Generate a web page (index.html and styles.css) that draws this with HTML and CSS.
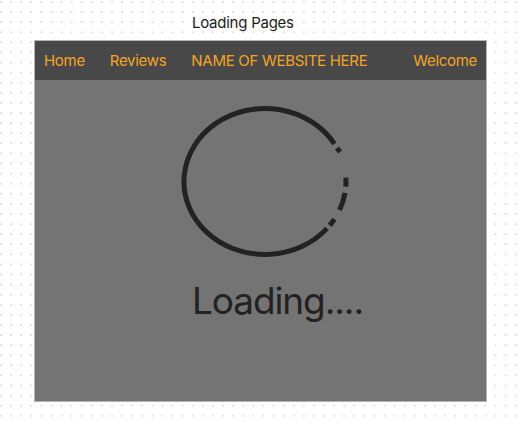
FILE: index.html
```html
<!DOCTYPE html>
<html>
<head>
<meta charset="utf-8">
<link rel="stylesheet" href="styles.css">
</head>
<body>
  <div class="title">Loading Pages</div>
  <div class="frame">
    <nav class="nav">
      <span class="nav-item">Home</span>
      <span class="nav-item">Reviews</span>
      <span class="nav-item">NAME OF WEBSITE HERE</span>
      <span class="nav-item nav-right">Welcome</span>
    </nav>
    <main class="content">
      <svg class="spinner" width="451" height="190" viewBox="35 80 451 190">
        <g fill="none" stroke="#222222" stroke-width="5">
          <path d="M327.0 228.4 A81 73 0 1 1 334.4 143.9"/>
          <path d="M336.9 148.2 L340.2 151.9"/>
          <path d="M345.9 177.7 A81 73 0 0 1 345.8 186.6"/>
          <path d="M345.0 192.9 A81 73 0 0 1 339.6 210.0"/>
          <path d="M334.4 219.1 A81 73 0 0 1 329.7 225.4"/>
        </g>
      </svg>
      <div class="loading">Loading....</div>
    </main>
  </div>
</body>
</html>
```
FILE: styles.css
```css
html, body {
  margin: 0;
  padding: 0;
}
body {
  width: 522px;
  height: 424px;
  overflow: hidden;
  font-family: Inter, "Noto Sans", sans-serif;
  background-color: #ffffff;
  background-image: radial-gradient(circle at 1px 1px, #d6d6d6 0.6px, transparent 1px);
  background-size: 10.1px 10.1px;
  background-position: 0px 1px;
  padding-top: 13px;
  box-sizing: border-box;
}
.title {
  font-size: 15px;
  line-height: 20px;
  letter-spacing: -0.25px;
  color: #1c1c1c;
  padding-left: 192px;
}
.frame {
  margin-top: 7px;
  margin-left: 34px;
  width: 453px;
  height: 362px;
  box-sizing: border-box;
  border: 1px solid #b4b4b4;
  background: #747474;
  display: flex;
  flex-direction: column;
}
.nav {
  height: 39px;
  background: #484848;
  display: flex;
  align-items: center;
  gap: 25px;
  padding: 1px 9px 0 9px;
  box-sizing: border-box;
}
.nav-item {
  font-size: 15px;
  line-height: 20px;
  letter-spacing: -0.3px;
  color: #f5a524;
}
.nav-right {
  margin-left: auto;
}
.content {
  display: flex;
  flex-direction: column;
}
.spinner {
  display: block;
}
.loading {
  margin-top: 9px;
  padding-left: 157px;
  font-size: 37px;
  line-height: 44px;
  letter-spacing: -1.1px;
  color: #222222;
}
```
